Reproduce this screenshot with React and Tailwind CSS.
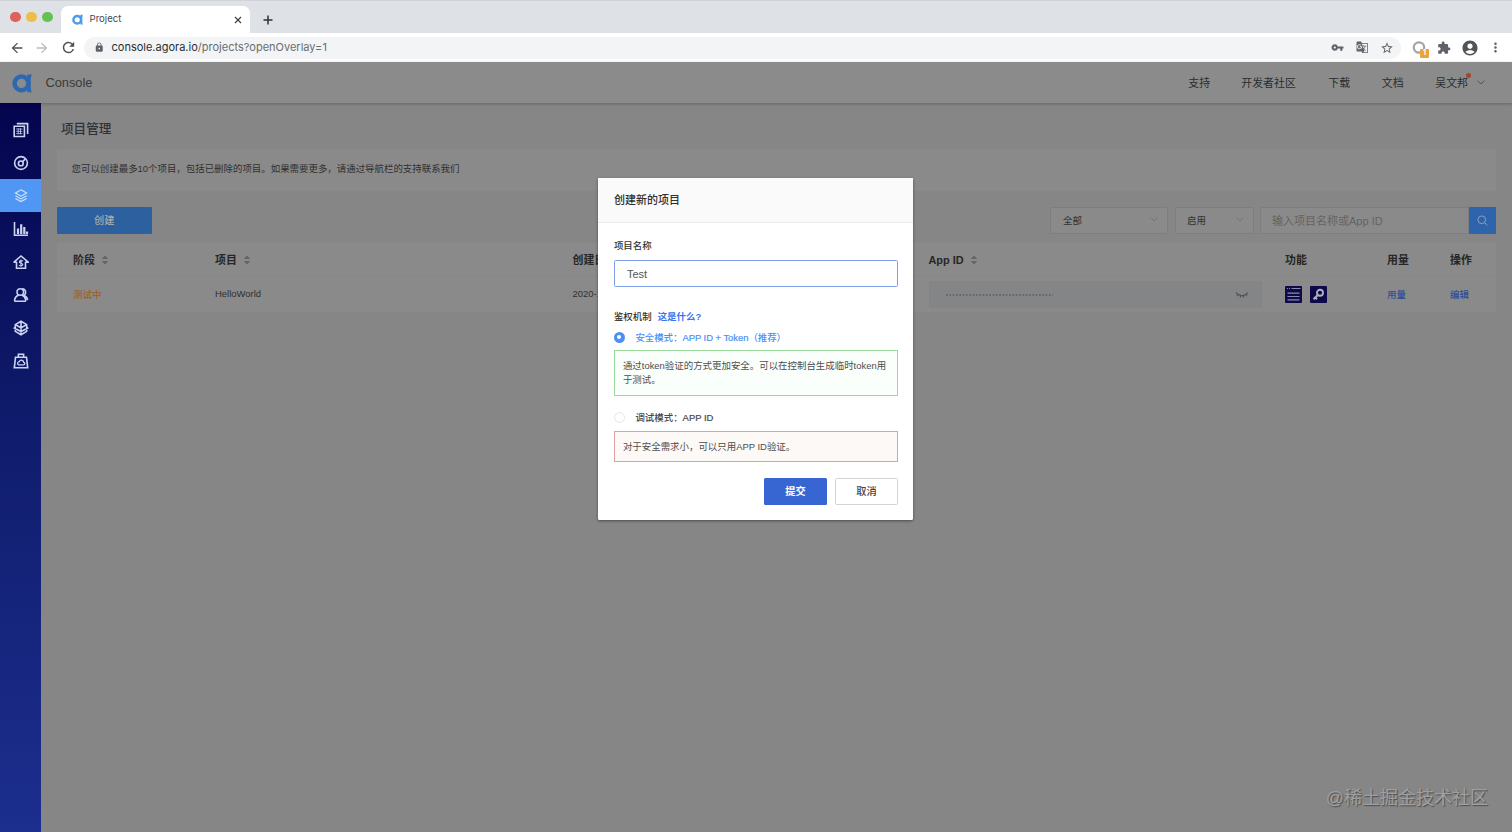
import React from "react";
import { MdVpnKey, MdLock, MdExtension, MdAccountCircle, MdMoreVert, MdStarBorder, MdGTranslate, MdArrowBack, MdArrowForward, MdRefresh } from "react-icons/md";

function AgoraMark({ className }) {
  return (
    <svg viewBox="0 0 20 20" className={className} fill="none" stroke="currentColor">
      <circle cx="9.500" cy="10.400" r="6.900" strokeWidth="4.500" />
      <path d="M15.200 1.400h4.600c-.9 2-1.100 4.600-1.100 8.900 0 4.500.200 6.700 1 9h-4.300z" fill="currentColor" stroke="none" />
    </svg>
  );
}

function TabBar() {
  return (
    <div className="flex h-[33px] shrink-0 items-end bg-[#dee1e5] border-t border-[#cfd2d6]">
      <div className="flex w-[61px] items-center gap-[5.500px] self-start pl-[10px] pt-[10.500px]">
        <span className="size-[10.500px] rounded-full bg-[#e0605a]" />
        <span className="size-[10.500px] rounded-full bg-[#ecbd49]" />
        <span className="size-[10.500px] rounded-full bg-[#63c253]" />
      </div>
      <div className="flex h-[27px] w-[189px] items-center rounded-t-[7px] bg-white pl-[11px] pr-[8px]">
        <AgoraMark className="size-[11px] text-[#4b9aec]" />
        <span className="ml-[6.500px] flex-1 font-['Inter'] text-[9.600px] text-[#45484c]">Project</span>
        <svg viewBox="0 0 8 8" className="size-[8px]" stroke="#3c4043" strokeWidth="1.200"><path d="M1 1l6 6M7 1L1 7" /></svg>
      </div>
      <svg viewBox="0 0 10 10" className="mb-[8.500px] ml-[12.500px] size-[10px]" stroke="#303336" strokeWidth="1.500"><path d="M5 .5v9M.5 5h9" /></svg>
    </div>
  );
}

function Toolbar() {
  return (
    <div className="flex h-[29px] shrink-0 items-center bg-white text-[#5f6368]">
      <MdArrowBack className="ml-[9px] size-[16px] text-[#4c4f53]" />
      <MdArrowForward className="ml-[9px] size-[16px] text-[#b9bbbe]" />
      <MdRefresh className="ml-[9.500px] size-[17px] text-[#4c4f53]" />
      <div className="ml-[7.500px] flex h-[22px] w-[1317px] items-center rounded-full bg-[#f3f4f5] pl-[10px] pr-[7px]">
        <MdLock className="size-[10.500px]" />
        <span className="ml-[7px] flex-1 whitespace-nowrap font-['Inter'] text-[11px] text-[#6a6d71]">
          <span className="text-[#2b2e31]">console.agora.io</span>/projects?openOverlay=1
        </span>
        <MdVpnKey className="size-[13px]" />
        <MdGTranslate className="ml-[12px] size-[12.500px]" />
        <MdStarBorder className="ml-[12px] size-[14px]" />
      </div>
      <div className="relative ml-[10px] flex size-[16px] items-center">
        <svg viewBox="0 0 16 16" className="size-[16px]" fill="none" stroke="#a2a4a6" strokeWidth="2.200"><circle cx="8" cy="7.500" r="5.200" /></svg>
        <span className="absolute left-[9px] top-[9px] flex h-[9px] w-[9px] items-center justify-center rounded-[1px] bg-[#eba43b] font-['Inter'] text-[7px] font-bold text-white">1</span>
      </div>
      <MdExtension className="ml-[10px] size-[14px]" />
      <MdAccountCircle className="ml-[10px] size-[18px] text-[#505357]" />
      <MdMoreVert className="ml-[9px] size-[15px]" />
    </div>
  );
}

function AppHeader() {
  return (
    <div className="z-10 flex h-[41px] shrink-0 items-center bg-[#8b8b8b] pl-[12px] pt-px text-[10.900px] text-[#2c2c2c] shadow-[0_1px_3px_rgba(0,0,0,0.250)]">
      <AgoraMark className="mb-px size-[20px] text-[#2e69b0]" />
      <span className="ml-[13.500px] flex-1 text-[12.800px] text-[#3a3a3a]">Console</span>
      <span className="w-[53px] pt-px">支持</span>
      <span className="w-[87px] pt-px">开发者社区</span>
      <span className="w-[53.500px] pt-px">下载</span>
      <span className="w-[53.500px] pt-px">文档</span>
      <span className="relative pt-px">吴文邦<span className="absolute -right-[2.500px] -top-[1px] size-[4.500px] rounded-full bg-[#a3452b]" /></span>
      <Chevron className="mb-px ml-[9px] mr-[27px] h-[5px] w-[8px] text-[#444]" />
    </div>
  );
}

function Chevron({ className }) {
  return <svg viewBox="0 0 8 5" className={className} fill="none" stroke="currentColor" strokeWidth=".8"><path d="M.7.700L4 4 7.300.700" /></svg>;
}

const navIcons = [
  <g key="pages"><path d="M1.200 4.200h10.200v10.300H1.200zM3.800 1.600H14.600V12" /><path d="M3.200 7h6.200M3.200 9.300h6.200M3.200 11.600h6.200M5.200 6.300v6M7.500 6.300v6" strokeWidth=".8" /></g>,
  <g key="gauge"><circle cx="8" cy="8" r="6.400" /><circle cx="7.800" cy="8.400" r="2.400" /><path d="M9.600 6.600l2.600-2.400" /></g>,
  <g key="layers" strokeWidth="1.100" stroke="#d3e4fc"><path d="M8 1.800l5.600 3.200L8 8.200 2.400 5z" /><path d="M2.400 7.700L8 10.900l5.600-3.200M2.400 10.400L8 13.600l5.600-3.200" /></g>,
  <g key="bars"><path d="M1.500 1v13.300H15" /><path d="M5 7.500v5.600M8.200 3.200v9.900M11.300 6v7.100M14 10.600v2.500" strokeWidth="2.200" /></g>,
  <g key="house"><path d="M3.500 8v6.300h9V8M.6 8.300L8 2l7.400 6.300H12M.6 8.300H4" /><path d="M9.900 7.300C9.400 6.300 6.300 6.300 6.300 8c0 1.600 3.500.8 3.500 2.500 0 1.600-3.100 1.600-3.800.5M8 5.400v7.300" strokeWidth="1.100" /></g>,
  <g key="users"><circle cx="7.300" cy="5" r="3.300" /><path d="M5.500 8C3.300 9 2 10.500 1.600 12.800c-.2 1 .3 1.500 1.200 1.500h8.700c.9 0 1.400-.5 1.200-1.500-.4-2.300-1.700-3.800-3.700-4.800M9.300 1.700c3.800.2 4.300 4.700 1.900 6.400 1.800 1 3 2.600 3.500 4.900" /></g>,
  <g key="cube"><path d="M8 1.200l5.700 3.400v6.800L8 14.800l-5.700-3.400V4.600zM8 1.200v13.600M8 7.800l5.700-3.200M8 7.800L2.300 4.600M.6 7.700L8 11.500l7.400-3.800" /></g>,
  <g key="bag"><path d="M2.500 4.300h11l1.200 10.500H1.300zM5.400 4.300V1.300h5.200v3" /><path d="M5.800 11.800h4.700c1.700 0 1.700-2.400.2-2.500-.2-2.600-3.800-2.700-4.400-.6-2.100.2-2.100 2.900-.5 3.100z" strokeWidth="1.300" /></g>,
];

function Sidebar() {
  return (
    <nav className="flex w-[41px] shrink-0 flex-col bg-gradient-to-b from-[#05054f] via-[#111e70] to-[#1c2e8e] pt-[10px]">
      {navIcons.map((icon, i) => (
        <div key={i} className={`flex h-[33.100px] items-center justify-center ${i === 2 ? "bg-[#5097f3]" : ""}`}>
          <svg viewBox="0 0 16 16" className="ml-[1px] size-[16px]" fill="none" stroke="#ccd3f0" strokeWidth="1.600">{icon}</svg>
        </div>
      ))}
    </nav>
  );
}

function Sorter() {
  return (
    <svg viewBox="0 0 8 10" className="ml-[6px] inline-block h-[10px] w-[8px] align-[-1px]" fill="#656565"><path d="M4 .5L7.300 4H.7zM4 9.500L7.300 6H.7z" /></svg>
  );
}

const columns = "grid grid-cols-[142px_357.500px_356px_356.500px_102px_63px_1fr] items-center pl-[16px]";

function ProjectTable() {
  return (
    <div className="mt-[9px] bg-[#8a8a8a]">
      <div className={`${columns} h-[34px] border-b border-[#868686] pt-px text-[10.900px] font-bold text-[#262626]`}>
        <span>阶段<Sorter /></span>
        <span>项目<Sorter /></span>
        <span>创建日期</span>
        <span>App ID<Sorter /></span>
        <span>功能</span>
        <span>用量</span>
        <span>操作</span>
      </div>
      <div className={`${columns} h-[35px] text-[9.450px] text-[#303030]`}>
        <span className="pt-px font-medium text-[#9c6227]">测试中</span>
        <span>HelloWorld</span>
        <span>2020-12-05</span>
        <span className="flex h-[27px] w-[333px] items-center justify-between rounded-[2px] border border-[#828486] bg-[#838587] pl-[16px] pr-[12px]">
          <svg viewBox="0 0 107 2" className="h-[2px] w-[107px]" stroke="#5f6164" strokeWidth="1.300" strokeDasharray="1.800 1.520"><path d="M0 1h107" /></svg>
          <svg viewBox="0 0 14 8" className="h-[8px] w-[14px]" fill="none" stroke="#505255" strokeWidth="1.100"><path d="M1 1.500c3 4.300 9 4.300 12 0M3 3.500L2 5M5.600 4.800l-.4 1.800M8.400 4.800l.4 1.800M11 3.500L12 5" /></svg>
        </span>
        <span className="flex gap-[8px]">
          <svg viewBox="0 0 17 17" className="size-[17px]" stroke="#8b8ba8"><rect width="17" height="17" rx="1" fill="#0e0a4a" stroke="none" /><path d="M6.500 2.500H15.500M2 2.500h1M4 2.500h1M2.500 7.200h12M2.500 10.500h12M2.500 13.800h12" strokeWidth="1.200" /></svg>
          <svg viewBox="0 0 17 17" className="size-[17px]" fill="none" stroke="#b0b0bd"><rect width="17" height="17" rx="1" fill="#0e0a4a" stroke="none" /><circle cx="10" cy="6.800" r="3" strokeWidth="1.900" /><path d="M7.800 9L3.500 13.300M5 11.200l2 2" strokeWidth="2" /></svg>
        </span>
        <span className="pt-px font-medium text-[#2b4d9c]">用量</span>
        <span className="pt-px font-medium text-[#2b4d9c]">编辑</span>
      </div>
    </div>
  );
}

function Projects() {
  return (
    <main className="min-w-0 flex-1 bg-[#868686] pl-[16px] pr-[16px] pt-[16px]">
      <h1 className="ml-[4px] h-[30px] pt-px text-[12.600px] font-medium leading-[19px] text-[#2f3038]">项目管理</h1>
      <div className="flex h-[42px] items-center bg-[#8a8a8a] pl-[14.500px] pb-[1px] text-[9.450px] text-[#303030]">您可以创建最多10个项目，包括已删除的项目。如果需要更多，请通过导航栏的支持联系我们</div>
      <div className="mt-[16px] flex h-[27px] text-[9.450px] text-[#303030]">
        <div className="flex w-[94.500px] items-center justify-center rounded-[1px] bg-[#2d609f] pt-px text-[10.200px] font-medium text-[#a5a8ad]">创建</div>
        <div className="ml-auto flex w-[118px] items-center justify-between rounded-[1px] border border-[#7e7e7e] bg-[#8a8a8a] pl-[12px] pr-[9px] pt-px">全部<Chevron className="mb-[3px] h-[5px] w-[8px] text-[#6e6e6e]" /></div>
        <div className="ml-[7px] flex w-[79px] items-center justify-between rounded-[1px] border border-[#7e7e7e] bg-[#8a8a8a] pl-[11px] pr-[9px] pt-px">启用<Chevron className="mb-[3px] h-[5px] w-[8px] text-[#6e6e6e]" /></div>
        <div className="ml-[6px] flex w-[209px] items-center border border-[#7e7e7e] bg-[#8a8a8a] pl-[11px] pt-px text-[11px] text-[#636363]">输入项目名称或App ID</div>
        <div className="flex w-[27px] items-center justify-center bg-[#2d64ab]">
          <svg viewBox="0 0 12 12" className="size-[11px]" fill="none" stroke="#8fa6c2" strokeWidth="1"><circle cx="5.200" cy="5.200" r="4.200" /><path d="M8.300 8.300l3 3" /></svg>
        </div>
      </div>
      <ProjectTable />
    </main>
  );
}

function CreateDialog() {
  return (
    <div role="dialog" className="absolute left-[598.400px] top-[178px] z-20 h-[342px] w-[315px] rounded-[1.500px] bg-white text-[9.450px] text-[#4d4d4d] shadow-[0_1px_3px_rgba(0,0,0,0.450)]">
      <div className="flex h-[45px] items-center border-b border-[#e9e9e9] bg-[#fafafa] pl-[15.500px] text-[11px] font-medium text-[#303030]">创建新的项目</div>
      <div className="px-[15.500px]">
        <div className="mt-[15px] h-[15px] pt-px font-medium leading-[14px] text-[#333]">项目名称</div>
        <div className="mt-[7px] flex h-[27px] items-center rounded-[1.500px] border border-[#7b9fe6] pl-[12px] pt-px text-[11px] text-[#555]">Test</div>
        <div className="mt-[23px] flex h-[14px] gap-[6px] font-medium leading-[14px] text-[#333]">
          <span>鉴权机制</span>
          <span className="font-bold text-[#3b75ee]">这是什么?</span>
        </div>
        <div className="mt-[5px] flex h-[16px] items-center font-medium leading-[16px] text-[#4b91f3]">
          <span className="mr-[10.500px] flex size-[11px] items-center justify-center rounded-full bg-[#4b91f3]"><span className="size-[4px] rounded-full bg-white" /></span>
          <span className="whitespace-nowrap pt-px tracking-[-0.040px]">安全模式：<span className="[-webkit-text-stroke:0.200px]">APP ID + Token</span>（推荐）</span>
        </div>
        <div className="mt-[5px] h-[46px] border border-[#96d998] bg-[#fbfffb] px-[8px] pt-[8px] leading-[14px]">
          <div className="whitespace-nowrap">通过token验证的方式更加安全。可以在控制台生成临时token用</div>
          <div>于测试。</div>
        </div>
        <div className="mt-[13px] flex h-[17px] items-center font-medium leading-[16px] text-[#484848]">
          <span className="mr-[10.500px] size-[11px] rounded-full border border-[#e6e6e6] bg-white" />
          <span className="pt-px">调试模式：<span className="[-webkit-text-stroke:0.200px]">APP ID</span></span>
        </div>
        <div className="mt-[5px] h-[31px] border border-[#e0a09f] bg-[#fdf9f7] px-[8px] pt-[7px] leading-[15px]">对于安全需求小，可以只用APP ID验证。</div>
        <div className="mt-[16px] flex h-[27px] justify-end gap-[8px] text-[10.200px] font-medium">
          <button className="w-[63px] rounded-[1.500px] bg-[#3766d2] font-bold text-white">提交</button>
          <button className="w-[63px] rounded-[1.500px] border border-[#d3d3d3] bg-white text-[#444]">取消</button>
        </div>
      </div>
    </div>
  );
}

export default function App() {
  return (
    <div className="relative flex h-[832px] w-[1512px] flex-col overflow-hidden bg-[#868686] font-['Liberation_Sans','Noto_Sans_CJK_SC',sans-serif]">
      <TabBar />
      <Toolbar />
      <AppHeader />
      <div className="flex min-h-0 flex-1">
        <Sidebar />
        <Projects />
      </div>
      <CreateDialog />
      <div className="absolute bottom-[22px] right-[24px] z-10 whitespace-nowrap text-[18px] leading-[24px] text-[#a0a0a0] [text-shadow:1px_1px_1px_#4d4d4d]">@稀土掘金技术社区</div>
    </div>
  );
}
